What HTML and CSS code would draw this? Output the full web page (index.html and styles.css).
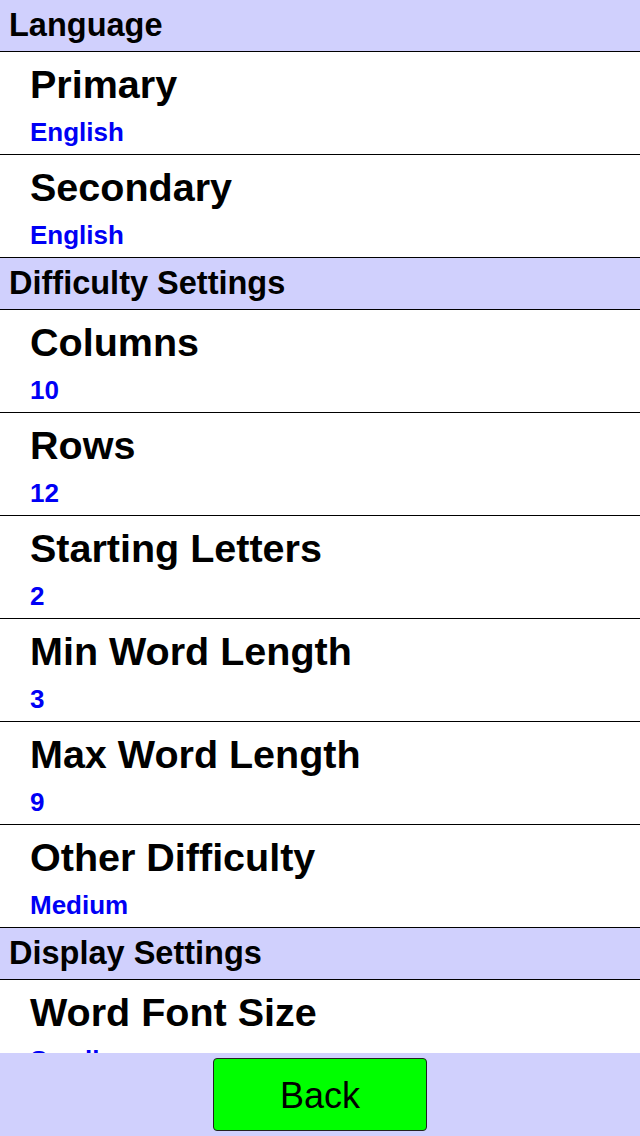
FILE: index.html
```html
<!DOCTYPE html>
<html lang="en">
<head>
  <meta charset="UTF-8" />
  <meta name="viewport" content="width=device-width, initial-scale=1" />
  <title>Settings</title>
  <link rel="stylesheet" href="styles.css">
</head>
<body>
  <div class="screen">
    <div class="settings-list">
      <div class="section-header">Language</div>
      <div class="setting-item">
        <div class="setting-title">Primary</div>
        <div class="setting-value">English</div>
      </div>
      <div class="setting-item">
        <div class="setting-title">Secondary</div>
        <div class="setting-value">English</div>
      </div>

      <div class="section-header">Difficulty Settings</div>
      <div class="setting-item">
        <div class="setting-title">Columns</div>
        <div class="setting-value">10</div>
      </div>
      <div class="setting-item">
        <div class="setting-title">Rows</div>
        <div class="setting-value">12</div>
      </div>
      <div class="setting-item">
        <div class="setting-title">Starting Letters</div>
        <div class="setting-value">2</div>
      </div>
      <div class="setting-item">
        <div class="setting-title">Min Word Length</div>
        <div class="setting-value">3</div>
      </div>
      <div class="setting-item">
        <div class="setting-title">Max Word Length</div>
        <div class="setting-value">9</div>
      </div>
      <div class="setting-item">
        <div class="setting-title">Other Difficulty</div>
        <div class="setting-value">Medium</div>
      </div>

      <div class="section-header">Display Settings</div>
      <div class="setting-item">
        <div class="setting-title">Word Font Size</div>
        <div class="setting-value">Small</div>
      </div>
    </div>
    <footer class="bottom-bar">
      <button class="back-btn" type="button">Back</button>
    </footer>
  </div>
</body>
</html>
```

FILE: styles.css
```css
body, html {
  margin: 0;
  padding: 0;
  height: 100%;
}
body {
  font-family: "Liberation Sans", Arial, sans-serif;
  background: #fff;
  color: #000;
}
.screen {
  display: flex;
  flex-direction: column;
  height: 1136px;
  overflow: hidden;
}
.settings-list {
  flex: 1;
  overflow: hidden;
}
.section-header {
  height: 51px;
  line-height: 51px;
  padding-left: 9px;
  background: #d0d0fd;
  border-bottom: 1px solid #000;
  font-size: 32.5px;
  font-weight: 700;
}
.setting-item {
  height: 94px;
  padding: 8px 0 0 30px;
  border-bottom: 1px solid #000;
}
.setting-title {
  font-size: 39.5px;
  line-height: 48px;
  font-weight: 700;
}
.setting-value {
  margin-top: 9px;
  font-size: 26px;
  line-height: 30px;
  font-weight: 700;
  color: #0000f5;
}
.bottom-bar {
  height: 83px;
  flex: none;
  background: #d0d0fd;
  display: flex;
  justify-content: center;
  align-items: center;
}
.back-btn {
  width: 214px;
  height: 73px;
  background: #00ff00;
  border: 1px solid #222;
  border-radius: 4px;
  font-family: "Liberation Sans", Arial, sans-serif;
  font-size: 36px;
  color: #000;
  padding: 2px 0 0;
}
```
